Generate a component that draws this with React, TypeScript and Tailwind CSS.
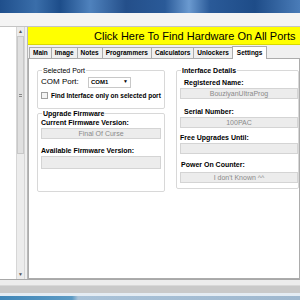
const tabs = ["Main", "Image", "Notes", "Programmers", "Calculators", "Unlockers"]

function Field({ value, className = "" }: { value?: string; className?: string }) {
  return (
    <div
      className={`h-[11px] bg-[#ececec] border border-[#d4d4d4] text-[7px] leading-[9px] text-[#8a8a8a] text-center ${className}`}
    >
      {value}
    </div>
  )
}

export default function App() {
  return (
    <div
      className="w-[300px] h-[300px] overflow-hidden flex flex-col bg-white text-black"
      style={{ fontFamily: '"Liberation Sans", Arial, sans-serif' }}
    >
      {/* window title bar */}
      <div className="h-[13px] shrink-0 bg-[linear-gradient(90deg,#1f4f8c_0%,#3a6eaa_12%,#1d4d8a_20%,#4f82bd_30%,#244f8a_42%,#2a5a98_55%,#6b9ad0_63%,#2a5a98_70%,#1e4c88_85%,#4a7cb8_100%)]" />

      {/* toolbar strip */}
      <div className="h-[14px] shrink-0 bg-[#f4f4f4] border-b border-[#c4c4c4]" />

      {/* main area */}
      <div className="flex-1 flex min-h-0 border-b border-[#a8a8a8]">
        {/* left list with scrollbar */}
        <div className="w-[16px] bg-white" />
        <div className="w-[9px] bg-[#ececec] border-x border-[#d6d6d6] flex flex-col items-center">
          <div className="h-[9px] text-[5px] leading-[9px] text-[#555]">▲</div>
          <div className="w-[7px] h-[118px] bg-[#e0e0e0] border border-[#c8c8c8] flex items-center justify-center">
            <div className="w-[3px] h-[3px] border-y border-[#888]" />
          </div>
          <div className="flex-1" />
          <div className="h-[9px] text-[5px] leading-[9px] text-[#555]">▼</div>
        </div>
        <div className="w-[2px] bg-[#f0f0f0]" />

        {/* right area */}
        <div className="flex-1 flex flex-col bg-[#f0f0f0] border-l border-[#b8b8b8] min-w-0">
          <div className="h-[18px] bg-[#ffff00] border-b border-[#d8d800] text-[11px] leading-[18px] whitespace-nowrap pl-[66px]">
            Click Here To Find Hardware On All Ports
          </div>

          {/* tabs */}
          <div className="mt-[2px] h-[11px] flex items-end pl-[1px]">
            {tabs.map((t) => (
              <div
                key={t}
                className="h-[11px] px-[3px] border border-b-0 border-[#acacac] -ml-px first:ml-0 bg-[#f0f0f0] text-[6.5px] font-bold leading-[10px] whitespace-nowrap"
              >
                {t}
              </div>
            ))}
            <div className="h-[13px] px-[4px] border border-b-0 border-[#acacac] -ml-px bg-white text-[6.5px] font-bold leading-[12px] whitespace-nowrap relative top-px">
              Settings
            </div>
          </div>

          {/* tab panel */}
          <div className="flex-1 bg-white border border-[#acacac] flex gap-[11px] pl-[8px] pt-[8px] min-w-0">
            {/* left column */}
            <div className="w-[128px] shrink-0 flex flex-col gap-[1px]">
              <fieldset className="border border-[#d8d8d8] rounded-[2px] px-[3px] pb-[8px] h-[42px]">
                <legend className="text-[7px] leading-[7px] px-[1px] ml-[1px]">Selected Port</legend>
                <div className="flex items-center mt-[2px]">
                  <span className="text-[8px] w-[47px]">COM Port:</span>
                  <div className="w-[43px] h-[11px] border border-[#c8c8c8] bg-white flex items-center justify-between px-[2px] text-[6px] font-bold">
                    <span>COM1</span>
                    <span className="text-[5px]">▼</span>
                  </div>
                </div>
                <div className="flex items-center mt-[3px] gap-[3px] whitespace-nowrap">
                  <div className="w-[7px] h-[7px] border border-[#a0a0a0] bg-[#f4f4f4]" />
                  <span className="text-[6.5px] font-bold">Find Interface only on selected port</span>
                </div>
              </fieldset>

              <fieldset className="border border-[#d8d8d8] rounded-[2px] px-[3px] h-[82px]">
                <legend className="text-[7px] leading-[7px] font-bold px-[1px] ml-[1px]">Upgrade Firmware</legend>
                <div className="text-[7px] font-bold mt-[1px] leading-[9px]">Current Firmware Version:</div>
                <Field value="Final Of Curse" className="mt-[1px]" />
                <div className="text-[7px] font-bold mt-[7px] leading-[9px]">Available Firmware Version:</div>
                <Field className="mt-[1px] h-[13px]" />
              </fieldset>
            </div>

            {/* right column */}
            <fieldset className="flex-1 min-w-0 border border-[#d8d8d8] rounded-[2px] pl-[3px] h-[122px]">
              <legend className="text-[7px] leading-[7px] font-bold px-[1px] ml-[1px]">Interface Details</legend>
              <div className="text-[7px] font-bold mt-[4px] ml-[4px] leading-[9px]">Registered Name:</div>
              <Field value="BouziyanUltraProg" className="mt-[1px]" />
              <div className="text-[7px] font-bold mt-[8px] ml-[4px] leading-[9px]">Serial Number:</div>
              <Field value="100PAC" className="mt-[1px]" />
              <div className="text-[7px] font-bold mt-[5px] leading-[9px]">Free Upgrades Until:</div>
              <Field className="mt-[1px]" />
              <div className="text-[7px] font-bold mt-[6px] ml-[1px] leading-[9px]">Power On Counter:</div>
              <Field value="I don't Known ^^" className="mt-[3px]" />
            </fieldset>
          </div>
        </div>
      </div>

      {/* bottom status strips */}
      <div className="h-[5px] shrink-0 bg-[#ececec]" />
      <div className="h-[8px] shrink-0 bg-[#c9c9c9] border-t border-[#d8d8d8]" />
      <div className="h-[3px] shrink-0 bg-[#e4ecf3]" />
      <div className="h-[4px] shrink-0 bg-[linear-gradient(90deg,#3f86b8_0%,#5b9ac4_24%,#a9c2d8_26%,#9fb8cf_100%)]" />
    </div>
  )
}
